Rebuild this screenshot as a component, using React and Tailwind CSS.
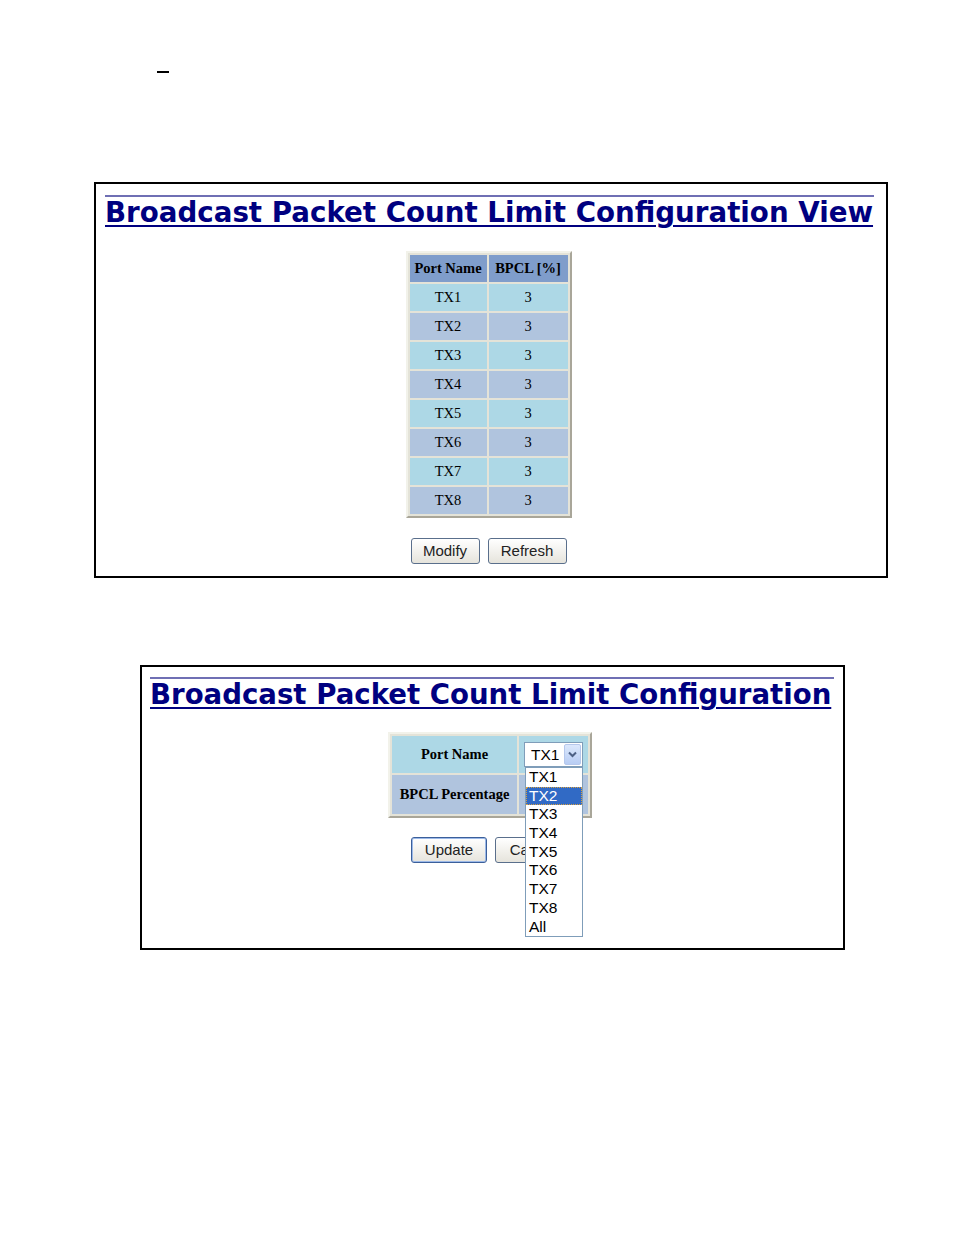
export default function App() {
    const ports = ["TX1", "TX2", "TX3", "TX4", "TX5", "TX6", "TX7", "TX8"];
    const options = [...ports, "All"];

    return (
        <div className="relative w-[954px] h-[1235px] bg-white">
            {/* stray underscore at top */}
            <div className="pt-[71px] pl-[157px]">
                <div className="w-[12px] h-[2px] bg-black" />
            </div>

            {/* View panel */}
            <div className="mt-[109px] ml-[94px] w-[794px] h-[396px] border-2 border-black px-[9px] pt-[11px]">
                <div className="h-[2px] bg-[#6f6fb4] mr-[3px]" />
                <h1
                    className="mt-[1px] text-[27.7px] leading-[30px] font-bold text-[#000080] underline decoration-[2px] underline-offset-[3px] whitespace-nowrap"
                    style={{ fontFamily: '"DejaVu Sans", Verdana, sans-serif' }}
                >
                    Broadcast Packet Count Limit Configuration View
                </h1>

                <div className="mt-[23px] flex justify-center pr-[5px]">
                    <table
                        className="border-separate border-spacing-[2px] border-2 border-t-[#f2f2ea] border-l-[#f2f2ea] border-r-[#a9a699] border-b-[#a9a699] bg-[#e4e3d8]"
                        style={{ fontFamily: '"Liberation Serif", "Times New Roman", serif' }}
                    >
                        <thead>
                            <tr className="bg-[#7f9dcb] h-[27px] text-[14.5px] font-bold text-black">
                                <th className="px-[4px] w-[77px]">Port Name</th>
                                <th className="px-[4px] w-[79px]">BPCL [%]</th>
                            </tr>
                        </thead>
                        <tbody>
                            {ports.map((p, i) => (
                                <tr
                                    key={p}
                                    className={`h-[27px] text-[14.5px] text-black text-center ${i % 2 === 0 ? "bg-[#add8e6]" : "bg-[#b0c4de]"}`}
                                >
                                    <td>{p}</td>
                                    <td>3</td>
                                </tr>
                            ))}
                        </tbody>
                    </table>
                </div>

                <div
                    className="mt-[20px] flex justify-center gap-[8px] pr-[5px]"
                    style={{ fontFamily: '"Liberation Sans", Arial, sans-serif' }}
                >
                    <button className="h-[26px] w-[69px] text-[15px] text-[#222] border border-[#5a6f8c] rounded-[3px] bg-gradient-to-b from-white to-[#e6e4dc]">
                        Modify
                    </button>
                    <button className="h-[26px] w-[79px] text-[15px] text-[#222] border border-[#5a6f8c] rounded-[3px] bg-gradient-to-b from-white to-[#e6e4dc]">
                        Refresh
                    </button>
                </div>
            </div>

            {/* Config panel */}
            <div className="mt-[87px] ml-[140px] w-[705px] h-[285px] border-2 border-black px-[8px] pt-[10px]">
                <div className="h-[2px] bg-[#6f6fb4] mr-[1px]" />
                <h1
                    className="mt-[1px] text-[27.6px] leading-[30px] font-bold text-[#000080] underline decoration-[2px] underline-offset-[3px] whitespace-nowrap"
                    style={{ fontFamily: '"DejaVu Sans", Verdana, sans-serif' }}
                >
                    Broadcast Packet Count Limit Configuration
                </h1>

                <div className="mt-[22px] flex justify-center pr-[5px]">
                    <table
                        className="border-separate border-spacing-[2px] border-2 border-t-[#f2f2ea] border-l-[#f2f2ea] border-r-[#a9a699] border-b-[#a9a699] bg-[#e4e3d8]"
                        style={{ fontFamily: '"Liberation Serif", "Times New Roman", serif' }}
                    >
                        <tbody>
                            <tr className="bg-[#add8e6] h-[37px]">
                                <td className="w-[125px] text-center text-[14.5px] font-bold text-black">Port Name</td>
                                <td className="w-[69px] pl-[5px] pr-[5px]">
                                    <div className="relative">
                                        <div
                                            className="h-[25px] w-[59px] flex items-center justify-between border border-[#7f9db9] bg-white pl-[6px] pr-[1px]"
                                            style={{ fontFamily: '"Liberation Sans", Arial, sans-serif' }}
                                        >
                                            <span className="text-[15.5px] text-black">TX1</span>
                                            <span className="w-[17px] h-[21px] flex items-center justify-center rounded-[2px] bg-gradient-to-b from-[#dce8fc] to-[#b8cdf4] border border-[#b6c8ec]">
                                                <svg width="9" height="7" viewBox="0 0 9 7">
                                                    <path d="M1 1.5 L4.5 5 L8 1.5" fill="none" stroke="#4d6185" strokeWidth="2" />
                                                </svg>
                                            </span>
                                        </div>
                                        {/* open dropdown list */}
                                        <div
                                            className="absolute left-[1px] top-[25px] w-[58px] border border-[#7f9db9] bg-white z-10"
                                            style={{ fontFamily: '"Liberation Sans", Arial, sans-serif' }}
                                        >
                                            {options.map((o) => (
                                                <div
                                                    key={o}
                                                    className={`h-[18.7px] leading-[18.7px] pl-[3px] text-[15.5px] ${o === "TX2" ? "bg-[#316ac5] text-white outline-1 outline-dotted outline-[#d8a040] -outline-offset-1" : "text-black"}`}
                                                >
                                                    {o}
                                                </div>
                                            ))}
                                        </div>
                                    </div>
                                </td>
                            </tr>
                            <tr className="bg-[#b0c4de] h-[39px]">
                                <td className="text-center text-[14.5px] font-bold text-black px-[5px]">BPCL Percentage</td>
                                <td />
                            </tr>
                        </tbody>
                    </table>
                </div>

                <div
                    className="mt-[19px] flex justify-center gap-[8px] pr-[3px]"
                    style={{ fontFamily: '"Liberation Sans", Arial, sans-serif' }}
                >
                    <button className="h-[26px] w-[76px] text-[15px] text-[#222] border border-[#3b5f9a] rounded-[3px] bg-gradient-to-b from-white to-[#e6e4dc] shadow-[inset_0_0_0_1px_#9cb9e8]">
                        Update
                    </button>
                    <button className="h-[26px] w-[76px] text-[15px] text-[#222] border border-[#5a6f8c] rounded-[3px] bg-gradient-to-b from-white to-[#e6e4dc]">
                        Cancel
                    </button>
                </div>
            </div>
        </div>
    );
}
